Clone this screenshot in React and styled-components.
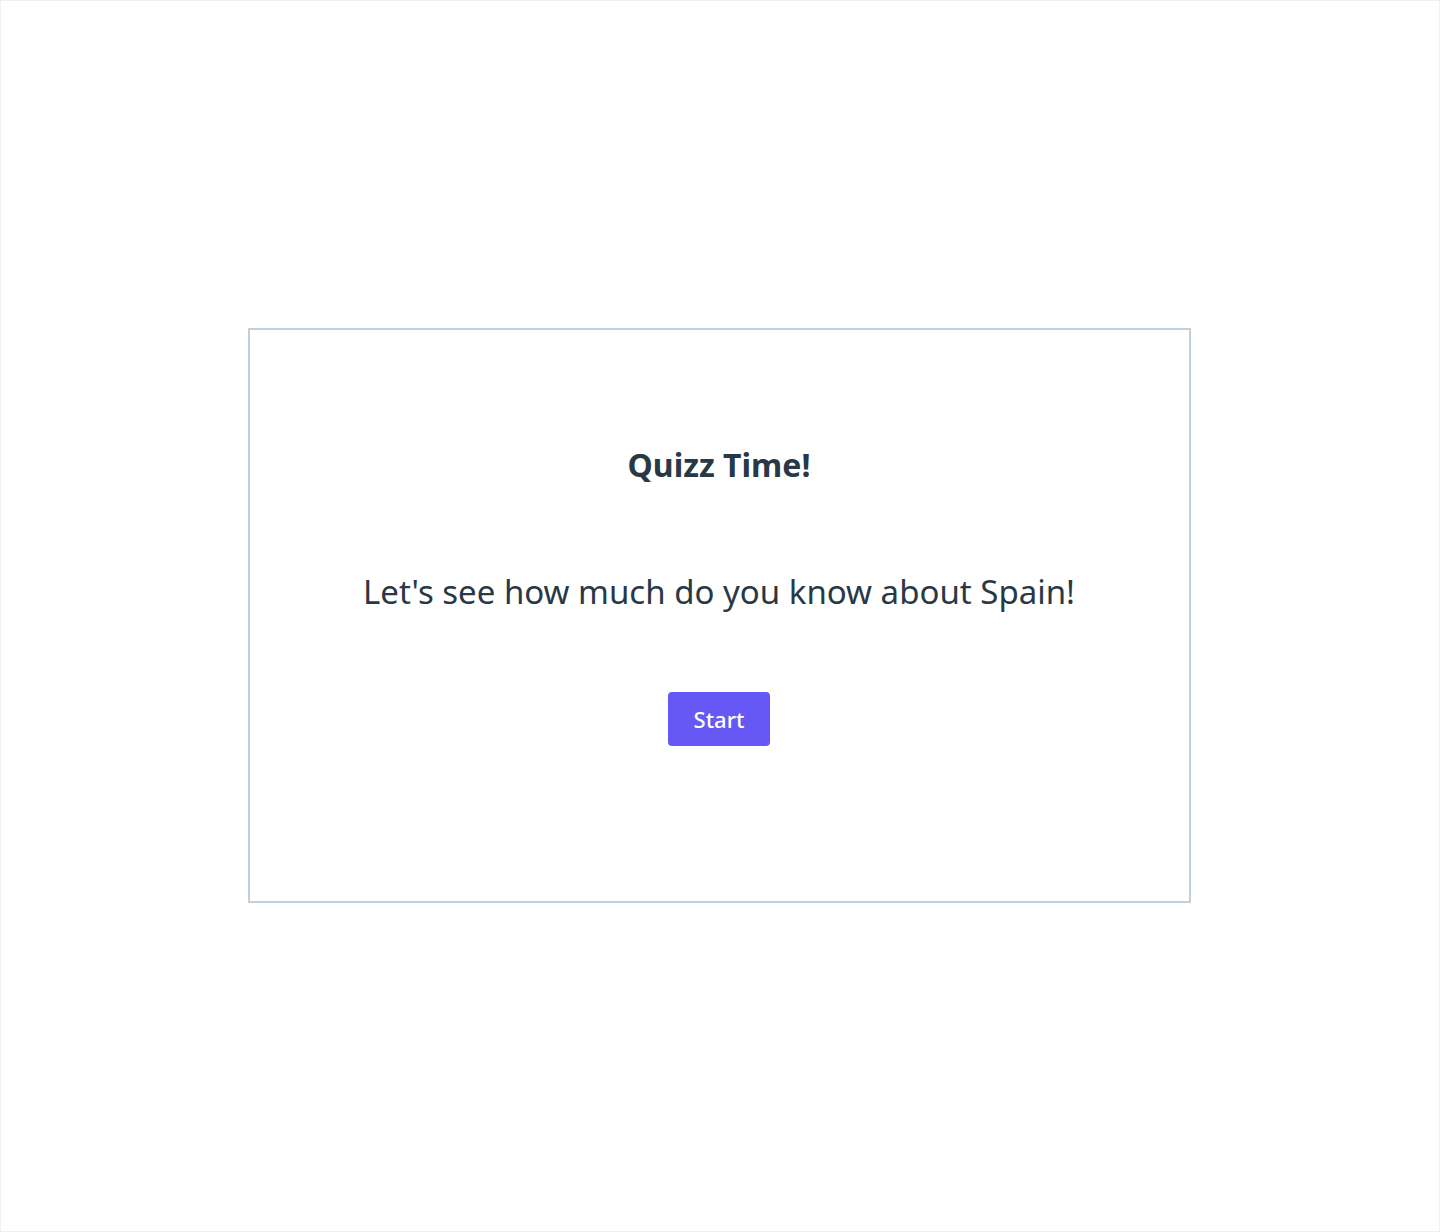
import styled, { createGlobalStyle } from 'styled-components'

const GlobalStyle = createGlobalStyle`
    html, body {
        margin: 0;
        padding: 0;
        background: #ffffff;
    }
    body {
        font-family: 'Noto Sans', 'Open Sans', sans-serif;
    }
`

// LOGIC
export default function App() {
    return (
        <>
            <GlobalStyle />
            <Page>
                <Card>
                    <Title>Quizz Time!</Title>
                    <Subtitle>Let's see how much do you know about Spain!</Subtitle>
                    <StartButton>Start</StartButton>
                </Card>
            </Page>
        </>
    )
}

// UI
const Page = styled.div`
    width: 1440px;
    height: 1232px;
    box-sizing: border-box;
    border: 1px solid #f0f0f0;
    display: flex;
    justify-content: center;
    align-items: center;
`
const Card = styled.div`
    width: 943px;
    height: 575px;
    box-sizing: border-box;
    border: 2px solid #c3cfd9;
    padding-top: 115px;
    display: flex;
    flex-direction: column;
    align-items: center;
    margin: -1px 0 0 -2px;
`
const Title = styled.h1`
    margin: 0;
    font-family: 'Noto Sans', sans-serif;
    font-weight: 700;
    font-size: 32px;
    line-height: 40px;
    color: #293845;
`
const Subtitle = styled.p`
    margin: 85px 0 0;
    font-family: 'Noto Sans', sans-serif;
    font-weight: 400;
    font-size: 33px;
    line-height: 44px;
    color: #293845;
`
const StartButton = styled.button`
    margin-top: 78px;
    width: 102px;
    height: 54px;
    border: none;
    border-radius: 4px;
    background: #6558f5;
    color: #ffffff;
    font-family: 'Noto Sans', sans-serif;
    font-weight: 500;
    font-size: 22px;
    cursor: pointer;
`
